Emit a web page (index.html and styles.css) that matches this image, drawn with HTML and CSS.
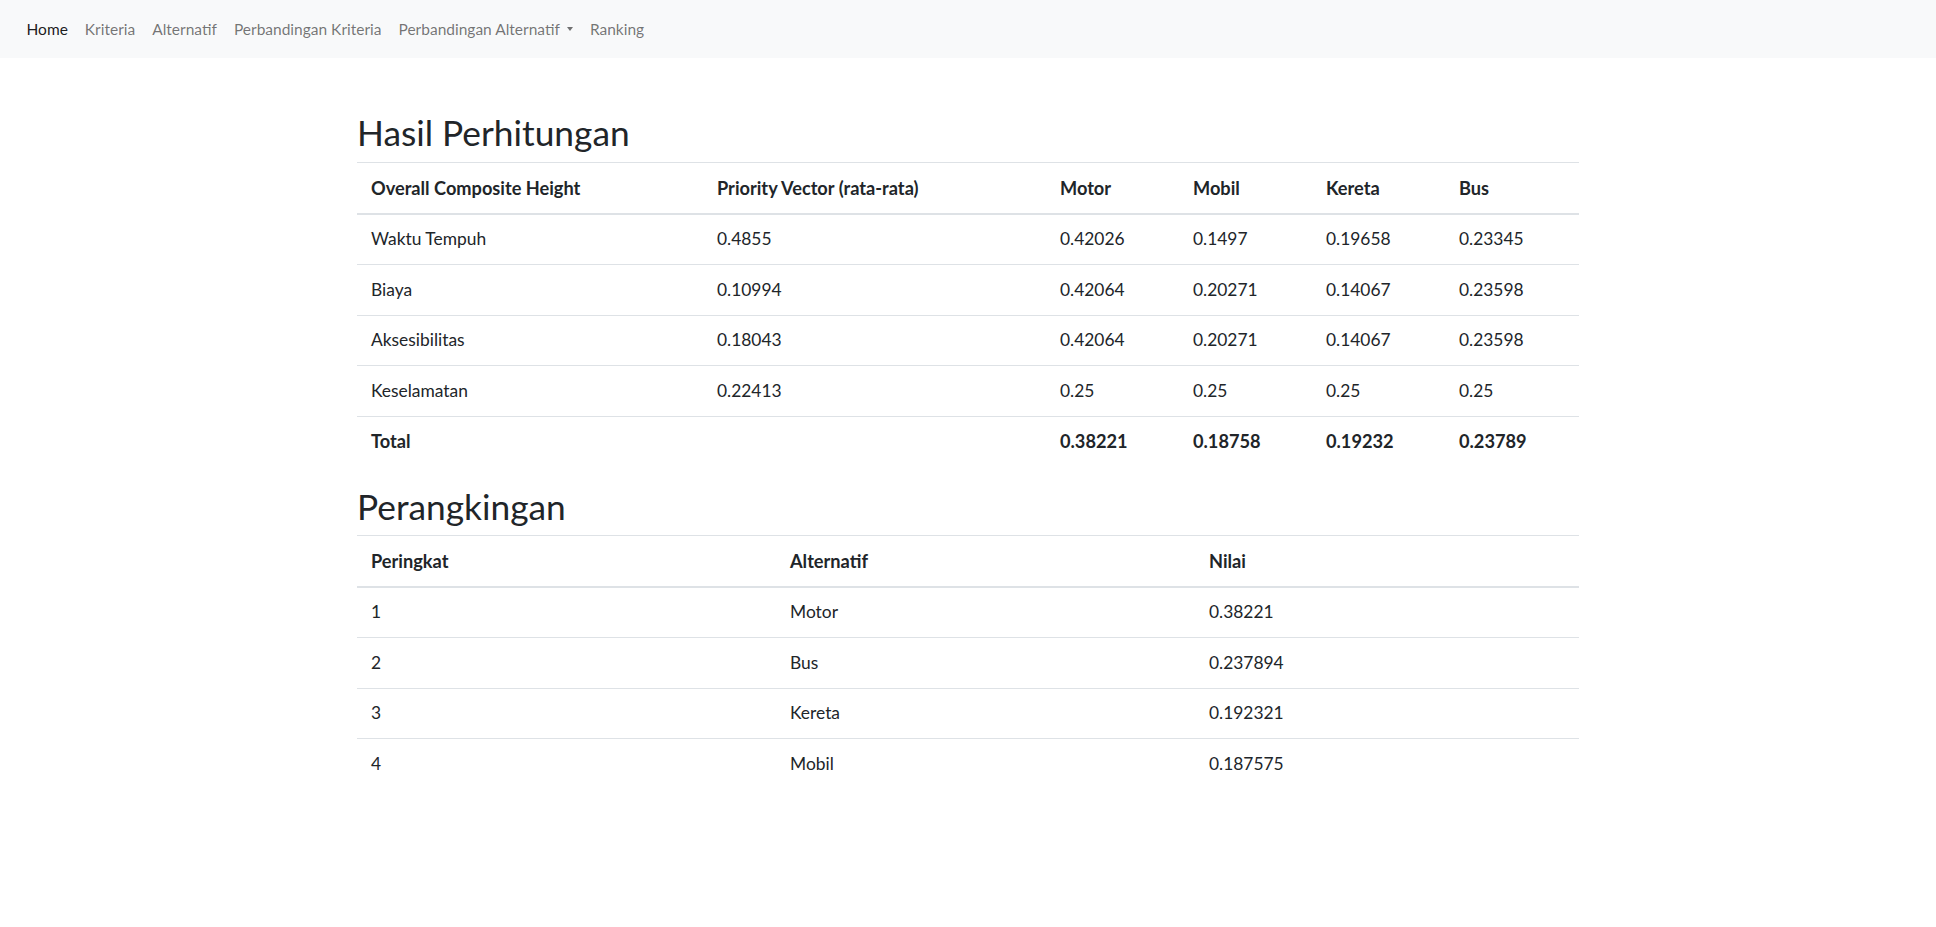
FILE: index.html
```html
<!DOCTYPE html>
<html lang="id">
<head>
<meta charset="utf-8">
<title>Hasil Perhitungan</title>
<link rel="stylesheet" href="styles.css">
</head>
<body>
<nav class="navbar">
  <ul class="nav">
    <li><a class="nav-link active" href="#">Home</a></li>
    <li><a class="nav-link" href="#">Kriteria</a></li>
    <li><a class="nav-link" href="#">Alternatif</a></li>
    <li><a class="nav-link" href="#">Perbandingan Kriteria</a></li>
    <li><a class="nav-link dropdown-toggle" href="#">Perbandingan Alternatif<span class="caret"></span></a></li>
    <li><a class="nav-link" href="#">Ranking</a></li>
  </ul>
</nav>
<main class="container">
  <h2 class="title">Hasil Perhitungan</h2>
  <table class="table">
    <colgroup>
      <col class="w346"><col class="w343"><col class="w133"><col class="w133"><col class="w133"><col class="w134">
    </colgroup>
    <thead>
      <tr><th>Overall Composite Height</th><th>Priority Vector (rata-rata)</th><th>Motor</th><th>Mobil</th><th>Kereta</th><th>Bus</th></tr>
    </thead>
    <tbody>
      <tr><td>Waktu Tempuh</td><td>0.4855</td><td>0.42026</td><td>0.1497</td><td>0.19658</td><td>0.23345</td></tr>
      <tr><td>Biaya</td><td>0.10994</td><td>0.42064</td><td>0.20271</td><td>0.14067</td><td>0.23598</td></tr>
      <tr><td>Aksesibilitas</td><td>0.18043</td><td>0.42064</td><td>0.20271</td><td>0.14067</td><td>0.23598</td></tr>
      <tr><td>Keselamatan</td><td>0.22413</td><td>0.25</td><td>0.25</td><td>0.25</td><td>0.25</td></tr>
    </tbody>
    <tfoot>
      <tr><th>Total</th><th></th><th>0.38221</th><th>0.18758</th><th>0.19232</th><th>0.23789</th></tr>
    </tfoot>
  </table>

  <h2 class="title second">Perangkingan</h2>
  <table class="table">
    <colgroup>
      <col class="w419"><col class="w419"><col class="w384">
    </colgroup>
    <thead>
      <tr><th>Peringkat</th><th>Alternatif</th><th>Nilai</th></tr>
    </thead>
    <tbody>
      <tr><td>1</td><td>Motor</td><td>0.38221</td></tr>
      <tr><td>2</td><td>Bus</td><td>0.237894</td></tr>
      <tr><td>3</td><td>Kereta</td><td>0.192321</td></tr>
      <tr class="last"><td>4</td><td>Mobil</td><td>0.187575</td></tr>
    </tbody>
  </table>
</main>
</body>
</html>
```

FILE: styles.css
```css
* { box-sizing: border-box; }

body {
  margin: 0;
  font-family: "Lato", "Liberation Sans", sans-serif;
  color: #212529;
  background: #fff;
}

.navbar {
  height: 58px;
  background: #f8f9fa;
  display: flex;
  align-items: center;
  padding: 0 0 0 18px;
}

.nav {
  display: flex;
  list-style: none;
  margin: 0;
  padding: 0;
}

.nav-link {
  display: flex;
  align-items: center;
  padding: 0 8.5px;
  font-size: 15.5px;
  line-height: 24px;
  color: rgba(0, 0, 0, 0.55);
  text-decoration: none;
}

.nav-link.active { color: rgba(0, 0, 0, 0.9); }

.caret {
  display: inline-block;
  margin-left: 7px;
  width: 0;
  height: 0;
  border-top: 4px solid rgba(0, 0, 0, 0.55);
  border-left: 3px solid transparent;
  border-right: 3px solid transparent;
}

.container {
  width: 1222px;
  margin: 0 auto;
  padding-top: 55px;
}

.title {
  font-size: 35.3px;
  font-weight: 400;
  line-height: 40px;
  margin: 0 0 8.5px;
}

.title.second {
  margin-top: 21px;
  margin-bottom: 7.5px;
}

.table {
  width: 100%;
  border-collapse: collapse;
  table-layout: fixed;
  font-size: 17.4px;
  border-top: 1px solid #dee2e6;
}

.w346 { width: 346px; }
.w343 { width: 343px; }
.w133 { width: 133px; }
.w134 { width: 134px; }
.w419 { width: 419px; }
.w384 { width: 384px; }

.table th,
.table td {
  text-align: left;
  padding: 12.75px 14px;
  line-height: 24px;
  vertical-align: middle;
}

.table th { font-weight: 700; font-size: 18.2px; }
.table td { font-weight: 400; }

.table thead th { border-bottom: 2px solid #dee2e6; padding-top: 13px; padding-bottom: 13px; }

.table tbody td { border-bottom: 1px solid #dee2e6; }

.table tbody tr.last td { border-bottom: 0; }
```
